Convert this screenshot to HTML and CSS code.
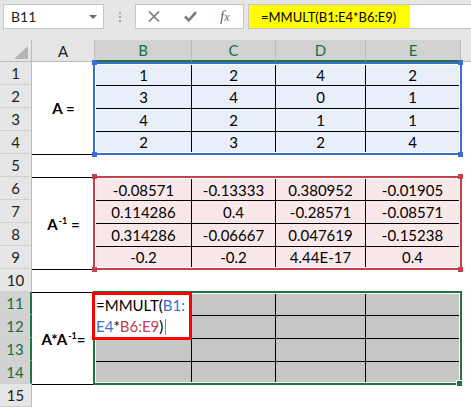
FILE: index.html
```html
<!DOCTYPE html>
<html lang="en">
<head>
    <meta charset="UTF-8">
    <meta name="viewport" content="width=device-width, initial-scale=1.0">
    <title>MMULT</title>
    <link rel="stylesheet" href="styles.css">
</head>
<body>
    <div class="toolbar">
        <div class="namebox">B11<span class="drop"></span></div>
        <div class="grip"><i></i><i></i><i></i></div>
        <div class="fxbox">
            <svg class="ico" width="12" height="11" viewBox="0 0 12 11"><path d="M1 0.5 L11 10.5 M11 0.5 L1 10.5"/></svg>
            <svg class="ico chk" width="13" height="11" viewBox="0 0 13 11"><path d="M1 5.5 L4.8 9.3 L12 1.2"/></svg>
            <span class="fx">f<span>x</span></span>
        </div>
        <div class="formula"><span class="hl">=MMULT(B1:E4*B6:E9)</span></div>
    </div>

    <div class="colbar">
        <div class="corner"><svg width="31" height="21" viewBox="0 0 31 21"><polygon points="14,19 28,19 28,6"/></svg></div>
        <div class="ch ca">A</div>
        <div class="ch cb on">B</div>
        <div class="ch cc on">C</div>
        <div class="ch cd on">D</div>
        <div class="ch ce on">E</div>
        <div class="ch cf"></div>
    </div>

    <div class="sheet">
        <div class="rows">
            <div class="rh">1</div>
            <div class="rh">2</div>
            <div class="rh">3</div>
            <div class="rh">4</div>
            <div class="rh">5</div>
            <div class="rh">6</div>
            <div class="rh">7</div>
            <div class="rh">8</div>
            <div class="rh">9</div>
            <div class="rh">10</div>
            <div class="rh on">11</div>
            <div class="rh on">12</div>
            <div class="rh on">13</div>
            <div class="rh on">14</div>
            <div class="rh">15</div>
        </div>
        <div class="cells">
            <div class="lbl l1"><span>A =</span></div>
            <div class="blk blue b1">
                <div class="c">1</div><div class="c">2</div><div class="c">4</div><div class="c">2</div>
                <div class="c">3</div><div class="c">4</div><div class="c">0</div><div class="c">1</div>
                <div class="c">4</div><div class="c">2</div><div class="c">1</div><div class="c">1</div>
                <div class="c">2</div><div class="c">3</div><div class="c">2</div><div class="c">4</div>
                <i class="hd tl"></i><i class="hd tr"></i><i class="hd bl"></i><i class="hd br"></i>
            </div>

            <div class="lbl l2"><span>A<sup>-1</sup> =</span></div>
            <div class="blk red b2">
                <div class="c">-0.08571</div><div class="c">-0.13333</div><div class="c">0.380952</div><div class="c">-0.01905</div>
                <div class="c">0.114286</div><div class="c">0.4</div><div class="c">-0.28571</div><div class="c">-0.08571</div>
                <div class="c">0.314286</div><div class="c">-0.06667</div><div class="c">0.047619</div><div class="c">-0.15238</div>
                <div class="c">-0.2</div><div class="c">-0.2</div><div class="c">4.44E-17</div><div class="c">0.4</div>
                <i class="hd tl"></i><i class="hd tr"></i><i class="hd bl"></i><i class="hd br"></i>
            </div>

            <div class="lbl l3"><span>A*A<sup>-1</sup>=</span></div>
            <div class="blk green b3">
                <div class="c"></div><div class="c"></div><div class="c"></div><div class="c"></div>
                <div class="c"></div><div class="c"></div><div class="c"></div><div class="c"></div>
                <div class="c"></div><div class="c"></div><div class="c"></div><div class="c"></div>
                <div class="c"></div><div class="c"></div><div class="c"></div><div class="c"></div>
                <i class="hd br"></i>
                <div class="editor">=MMULT(<span class="rb">B1:</span><br><span class="rb">E4</span>*<span class="rr">B6:E9</span>)<span class="caret"></span></div>
            </div>
        </div>
    </div>
</body>
</html>
```

FILE: styles.css
```css
body{
    margin: 0;
    background: #fff;
    font-family: Lato, "Liberation Sans", sans-serif;
    color: #000;
    width: 471px;
    height: 408px;
    overflow: hidden;
}
.toolbar{
    display: flex;
    align-items: flex-start;
    height: 40px;
    padding-top: 4px;
    box-sizing: border-box;
    background: #e6e6e6;
}
.namebox{
    display: flex;
    align-items: center;
    margin-left: 3px;
    width: 101px;
    height: 25px;
    box-sizing: border-box;
    padding-left: 7px;
    background: #fff;
    border: 1px solid #c6c6c6;
    font-size: 14px;
    color: #222;
}
.drop{
    margin-left: auto;
    margin-right: 6px;
    border-left: 4px solid transparent;
    border-right: 4px solid transparent;
    border-top: 4px solid #6a6a6a;
}
.grip{
    width: 31px;
    height: 25px;
    display: flex;
    flex-direction: column;
    align-items: center;
    justify-content: center;
    gap: 2px;
}
.grip i{
    width: 2px;
    height: 2px;
    background: #a8a8a8;
}
.fxbox{
    display: flex;
    align-items: center;
    width: 109px;
    height: 25px;
    box-sizing: border-box;
    padding-left: 12px;
    gap: 24px;
    background: #fff;
    border: 1px solid #c6c6c6;
}
.ico path{
    fill: none;
    stroke: #7a7a7a;
    stroke-width: 1.6;
}
.chk path{
    stroke-width: 2.6;
}
.fx{
    font-family: "Liberation Serif", serif;
    font-style: italic;
    font-size: 15px;
    color: #666;
    margin-left: -1px;
}
.fx span{
    font-size: 12px;
}
.formula{
    flex: 1;
    height: 25px;
    margin-left: 4px;
    box-sizing: border-box;
    background: #fff;
    border: 1px solid #c6c6c6;
    border-right: 0;
}
.hl{
    display: flex;
    align-items: center;
    width: 161px;
    height: 100%;
    box-sizing: border-box;
    padding-left: 12px;
    background: #ffff00;
    font-size: 13px;
}

.colbar{
    display: flex;
    height: 22px;
    background: #e6e6e6;
}
.corner{
    width: 32px;
    box-sizing: border-box;
    border-right: 1px solid #bcbcbc;
    border-bottom: 1px solid #bcbcbc;
}
.corner polygon{
    fill: #b4b4b4;
}
.ch{
    display: flex;
    align-items: center;
    justify-content: center;
    box-sizing: border-box;
    border-right: 1px solid #bcbcbc;
    border-bottom: 1px solid #bcbcbc;
    font-size: 15px;
    color: #222;
}
.ch.on{
    background: #d2d2d2;
    color: #1e6a46;
    border-bottom: 2px solid #217346;
}
.ca{ width: 63px; }
.cb{ width: 97px; }
.cc{ width: 84px; }
.cd{ width: 90px; }
.ce{ width: 95px; }
.cf{ flex: 1; border-right: 0; }

.sheet{
    display: flex;
}
.rows{
    width: 32px;
    flex: none;
}
.rh{
    height: 23px;
    box-sizing: border-box;
    display: flex;
    align-items: center;
    justify-content: center;
    background: #e6e6e6;
    border-right: 1px solid #bcbcbc;
    border-bottom: 1px solid #d0d0d0;
    font-size: 15px;
    color: #222;
}
.rh.on{
    background: #d2d2d2;
    color: #1e6a46;
    border-right: 2px solid #217346;
}
.cells{
    flex: 1;
    display: grid;
    grid-template-columns: 63px 366px 1fr;
    grid-template-rows: repeat(15, 23px);
}
.lbl{
    grid-column: 1;
    display: flex;
    align-items: center;
    justify-content: center;
    margin-bottom: -1px;
    border-bottom: 1px solid #000;
    font-weight: bold;
    font-size: 15px;
    white-space: nowrap;
}
.lbl sup{
    font-size: 9px;
    line-height: 0;
    vertical-align: 6px;
    margin-left: 1px;
}
.l1{ grid-row: 1 / 5; }
.l2{ grid-row: 6 / 10; border-top: 1px solid #000; }
.l3{ grid-row: 11 / 15; border-top: 1px solid #000; }

.blk{
    grid-column: 2;
    position: relative;
    display: grid;
    grid-template-columns: 96px 84px 90px 1fr;
    grid-template-rows: 22px 23px 23px 1fr;
    margin: -1px -1px -1px -2px;
    padding: 1px;
    border: 2px solid;
    background: #fff;
}
.b1{
    grid-row: 1 / 5;
    margin-top: 0;
    grid-template-rows: 21px 23px 23px 1fr;
}
.b2{ grid-row: 6 / 10; }
.b3{ grid-row: 11 / 15; }
.blue{ border-color: #3a6fcb; }
.red{ border-color: #c3404c; }
.green{ border-color: #217346; }

.c{
    display: flex;
    align-items: center;
    justify-content: center;
    box-sizing: border-box;
    border-right: 1px solid #000;
    border-bottom: 1px solid #000;
    font-size: 15px;
}
.c:nth-child(4n){ border-right: 0; }
.c:nth-child(n+13){ border-bottom: 0; }
.blue .c{ background: #e9eff9; }
.red .c{ background: #f9e8e9; }
.green .c{ background: #c6c6c6; }

.hd{
    position: absolute;
    width: 5px;
    height: 5px;
}
.blue .hd{ background: #3a6fcb; }
.red .hd{ background: #c3404c; }
.green .hd{ background: #217346; border: 1px solid #fff; }
.tl{ top: -4px; left: -3px; }
.tr{ top: -4px; right: -3px; }
.bl{ bottom: -4px; left: -3px; }
.br{ bottom: -4px; right: -3px; }

.editor{
    position: absolute;
    top: -1px;
    left: -3px;
    width: 100px;
    height: 48px;
    box-sizing: border-box;
    padding-left: 1px;
    border: 3px solid #ff0000;
    background: #fff;
    font-size: 15px;
    line-height: 21px;
    white-space: nowrap;
}
.rb{ color: #3a6fcb; }
.rr{ color: #c3404c; }
.caret{
    display: inline-block;
    width: 1px;
    height: 16px;
    margin-left: 2px;
    vertical-align: -3px;
    background: #8a8a8a;
}
```
